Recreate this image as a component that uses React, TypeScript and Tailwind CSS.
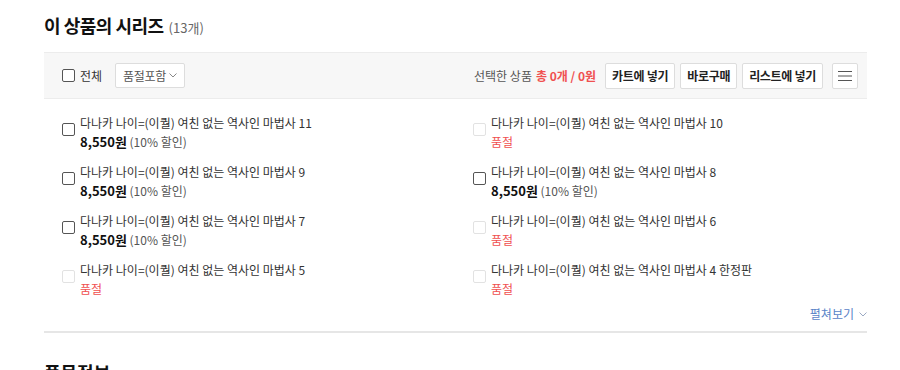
import React from "react";

type Item = { title: string; soldOut: boolean };

const items: Item[] = [
  { title: "다나카 나이=(이퀄) 여친 없는 역사인 마법사 11", soldOut: false },
  { title: "다나카 나이=(이퀄) 여친 없는 역사인 마법사 10", soldOut: true },
  { title: "다나카 나이=(이퀄) 여친 없는 역사인 마법사 9", soldOut: false },
  { title: "다나카 나이=(이퀄) 여친 없는 역사인 마법사 8", soldOut: false },
  { title: "다나카 나이=(이퀄) 여친 없는 역사인 마법사 7", soldOut: false },
  { title: "다나카 나이=(이퀄) 여친 없는 역사인 마법사 6", soldOut: true },
  { title: "다나카 나이=(이퀄) 여친 없는 역사인 마법사 5", soldOut: true },
  { title: "다나카 나이=(이퀄) 여친 없는 역사인 마법사 4 한정판", soldOut: true },
];

const font = { fontFamily: '"Noto Sans CJK KR", "Noto Sans", sans-serif' };

function Box({ disabled }: { disabled?: boolean }) {
  return (
    <span
      className={
        "inline-block w-[13px] h-[13px] rounded-[2px] border shrink-0 bg-white " +
        (disabled ? "border-[#e2e2e2] bg-[#fafafa]" : "border-[#555]")
      }
    />
  );
}

function Chevron({ color }: { color: string }) {
  return (
    <svg width="8" height="5" viewBox="0 0 8 5" fill="none">
      <path d="M0.5 0.5L4 4L7.5 0.5" stroke={color} strokeWidth="1" />
    </svg>
  );
}

const btn =
  "h-[26px] px-[6px] bg-white border border-[#ddd] rounded-[2px] text-[12px] font-semibold text-[#222] tracking-[-0.3px]";

export default function App() {
  return (
    <div className="bg-white w-[900px] h-[370px] overflow-hidden text-[#333]" style={font}>
      <div className="ml-[44px] w-[823px]">
        <h2 className="pt-[12px] flex items-baseline h-[52px]">
          <span className="text-[18px] font-bold text-[#111] tracking-[-0.5px] leading-[26px]">
            이 상품의 시리즈
          </span>
          <span className="ml-[5px] text-[13px] text-[#666]">(13개)</span>
        </h2>

        <div className="h-[47px] bg-[#f7f7f7] border-y border-[#ececec] flex items-center pl-[18px] pr-[9px]">
          <label className="flex items-center gap-[5px]">
            <Box />
            <span className="text-[12px] text-[#333]">전체</span>
          </label>
          <button className="ml-[13px] h-[25px] px-[7px] bg-white border border-[#ddd] rounded-[2px] flex items-center gap-[3px] text-[12px] text-[#555] tracking-[-0.3px]">
            품절포함
            <Chevron color="#888" />
          </button>
          <div className="ml-auto flex items-center">
            <span className="text-[12px] text-[#555]">선택한 상품</span>
            <span className="ml-[4px] text-[12px] text-[#f05050] font-bold">총 0개 / 0원</span>
            <button className={"ml-[9px] " + btn}>카트에 넣기</button>
            <button className={"ml-[5px] " + btn}>바로구매</button>
            <button className={"ml-[5px] " + btn}>리스트에 넣기</button>
            <button className="ml-[9px] w-[26px] h-[26px] bg-white border border-[#ddd] rounded-[2px] flex items-center justify-center">
              <svg width="14" height="12" viewBox="0 0 14 12" fill="none">
                <path d="M0 1.5H14M0 6H14M0 10.5H14" stroke="#555" strokeWidth="1" />
              </svg>
            </button>
          </div>
        </div>

        <div className="grid grid-cols-[411px_1fr] gap-y-[10px] pt-[15px] pl-[18px]">
          {items.map((it, i) => (
            <div key={i} className="flex items-start gap-[5px] h-[39px]">
              <span className="mt-[3px]">
                <Box disabled={it.soldOut} />
              </span>
              <div className="flex flex-col">
                <span className="text-[12px] leading-[18px] text-[#333]">{it.title}</span>
                {it.soldOut ? (
                  <span className="text-[12px] leading-[20px] text-[#f05050]">품절</span>
                ) : (
                  <span className="text-[12px] leading-[20px] text-[#555]">
                    <b className="text-[13px] text-[#111]">8,550원</b> (10% 할인)
                  </span>
                )}
              </div>
            </div>
          ))}
        </div>

        <div className="flex justify-end items-center gap-[5px] mt-[2px] h-[24px] text-[12px] text-[#5a84c8]">
          펼쳐보기
          <Chevron color="#9aa9c3" />
        </div>
        <div className="mt-[5px] border-t-2 border-[#e6e6e6]" />

        <div className="mt-[26px] text-[18px] font-bold text-[#111] leading-[26px]">품목정보</div>
      </div>
    </div>
  );
}
